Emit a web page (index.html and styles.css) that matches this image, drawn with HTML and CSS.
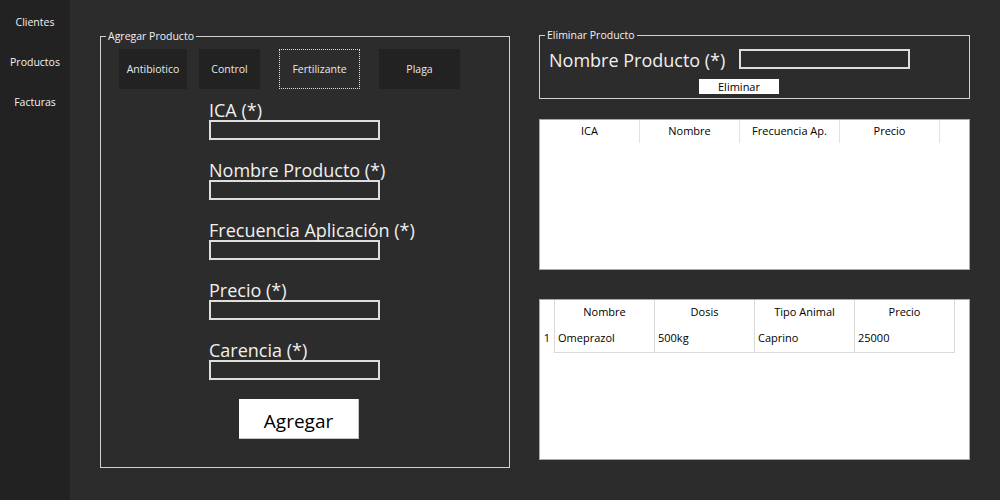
FILE: index.html
```html
<!DOCTYPE html>
<html lang="es">
<head>
<meta charset="utf-8">
<title>Productos</title>
<link rel="stylesheet" href="styles.css">
</head>
<body>
<div class="app">
  <nav class="sidebar">
    <div class="nav-item">Clientes</div>
    <div class="nav-item">Productos</div>
    <div class="nav-item">Facturas</div>
  </nav>
  <main class="main">
    <fieldset class="group add-group">
      <legend>Agregar Producto</legend>
      <div class="type-buttons">
        <button class="type-btn w68">Antibiotico</button>
        <button class="type-btn w61">Control</button>
        <button class="type-btn w81 sep focused">Fertilizante</button>
        <button class="type-btn w81 sep">Plaga</button>
      </div>
      <div class="fields">
        <div class="field"><label>ICA (*)</label><input class="text-input" type="text"></div>
        <div class="field"><label>Nombre Producto (*)</label><input class="text-input" type="text"></div>
        <div class="field"><label>Frecuencia Aplicación (*)</label><input class="text-input" type="text"></div>
        <div class="field"><label>Precio (*)</label><input class="text-input" type="text"></div>
        <div class="field"><label>Carencia (*)</label><input class="text-input" type="text"></div>
        <button class="btn-add">Agregar</button>
      </div>
    </fieldset>
    <section class="right">
      <fieldset class="group del-group">
        <legend>Eliminar Producto</legend>
        <div class="del-row">
          <label class="del-label">Nombre Producto (*)</label>
          <input class="text-input" type="text">
        </div>
        <div class="del-actions"><button class="btn-del">Eliminar</button></div>
      </fieldset>
      <div class="table table-products">
        <div class="thead thead-products">
          <div class="th">ICA</div>
          <div class="th">Nombre</div>
          <div class="th">Frecuencia Ap.</div>
          <div class="th">Precio</div>
        </div>
      </div>
      <div class="table table-animals">
        <div class="thead thead-animals">
          <div class="th corner"></div>
          <div class="th">Nombre</div>
          <div class="th">Dosis</div>
          <div class="th">Tipo Animal</div>
          <div class="th">Precio</div>
        </div>
        <div class="trow">
          <div class="td rownum">1</div>
          <div class="td">Omeprazol</div>
          <div class="td">500kg</div>
          <div class="td">Caprino</div>
          <div class="td">25000</div>
        </div>
      </div>
    </section>
  </main>
</div>
</body>
</html>
```
FILE: styles.css
```css
* { box-sizing: border-box; }
html, body { margin: 0; padding: 0; }
body {
  background: #2d2c2c;
  font-family: "Open Sans", "Noto Sans", sans-serif;
  color: #f0f0f0;
}
.app { display: flex; width: 1000px; height: 500px; }
.sidebar { width: 70px; flex-shrink: 0; background: #232222; padding-top: 2px; }
.nav-item {
  height: 40px; line-height: 40px; text-align: center;
  font-size: 10.5px; color: #f2f2f2;
}
.main { flex: 1; display: flex; gap: 29px; padding: 29px 0 0 30px; }

.group { margin: 0; padding: 0; border: 1px solid #d2d2d2; min-width: 0; }
.group legend {
  font-size: 10.5px; line-height: 12px; padding: 0 2px; margin-left: 5px;
  color: #f0f0f0;
}
.add-group { width: 410px; height: 438px; margin-top: 1px; }

.type-buttons { display: flex; gap: 12px; padding: 7px 0 0 18px; }
.type-btn {
  height: 40px; padding: 0; border: none; background: #222222;
  color: #e8e8e8; font-family: "Open Sans", sans-serif; font-size: 10.5px;
}
.w68 { width: 68px; }
.w61 { width: 61px; }
.w81 { width: 81px; }
.sep { margin-left: 7px; }
.focused { background: #2d2c2c; outline: 1px dotted #e0e0e0; outline-offset: -1px; }

.fields { padding: 10px 0 0 108px; }
.field label {
  display: block; font-size: 18px; line-height: 20px; padding-top: 1px;
  color: #f0f0f0; white-space: nowrap;
}
.text-input {
  display: block; width: 171px; height: 20px; margin: 0;
  border: 2px solid #dedede; background: transparent; outline: none;
}
.field .text-input { margin-bottom: 19px; }
.btn-add {
  display: block; width: 120px; height: 40px; margin-left: 30px; padding: 4px 0 0;
  background: #ffffff; color: #000; border: none;
  border-right: 1px solid #c4c4c4; border-bottom: 1px solid #c4c4c4;
  font-family: "Open Sans", sans-serif; font-size: 19px;
}

.right { width: 431px; display: flex; flex-direction: column; }
.del-group { height: 70px; }
.del-row { display: flex; align-items: flex-start; height: 20px; margin-top: 8px; padding-left: 9px; }
.del-label { width: 190px; font-size: 18px; line-height: 20px; padding-top: 1px; white-space: nowrap; }
.del-actions { padding: 10px 0 0 159px; }
.btn-del {
  display: block; width: 80px; height: 15px; padding: 0;
  background: #fff; color: #000; border: none;
  font-family: "Open Sans", sans-serif; font-size: 11px; line-height: 15px;
}

.table { background: #fff; border: 1px solid #a8a8a8; color: #000; font-size: 11px; }
.table-products { margin-top: 20px; height: 151px; }
.table-animals { margin-top: 29px; height: 161px; }
.thead { display: grid; }
.thead-products { grid-template-columns: repeat(4, 100px); height: 23px; }
.thead-animals { grid-template-columns: 15px repeat(4, 100px); height: 24px; }
.th { border-right: 1px solid #e2e2e2; text-align: center; line-height: 22px; }
.thead-animals .th { border-right-color: #dadada; line-height: 23px; }
.trow { display: grid; grid-template-columns: 15px repeat(4, 100px); height: 29px; }
.td {
  border-right: 1px solid #dadada; border-bottom: 1px solid #dadada;
  line-height: 28px; padding-left: 3px;
}
.td.rownum { border-bottom: none; padding-left: 0; text-align: center; }
```
